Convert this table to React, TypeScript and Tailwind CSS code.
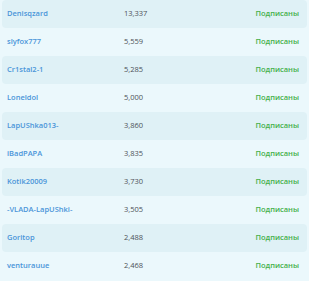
const rows = [
  { name: "Denisqzard", count: "13,337" },
  { name: "slyfox777", count: "5,559" },
  { name: "Cr1stal2-1", count: "5,285" },
  { name: "Loneldol", count: "5,000" },
  { name: "LapUShka013-", count: "3,860" },
  { name: "iBadPAPA", count: "3,835" },
  { name: "Kotik20009", count: "3,730" },
  { name: "-VLADA-LapUShki-", count: "3,505" },
  { name: "Goritop", count: "2,488" },
  { name: "venturauue", count: "2,468" },
];

export default function App() {
  return (
    <div
      className="w-[309px] h-[281px] bg-[#ebf8fc] px-[2px] overflow-hidden"
      style={{ fontFamily: '"Open Sans", "Noto Sans", sans-serif' }}
    >
      {rows.map((r, i) => (
        <div
          key={r.name}
          className={
            "flex items-center h-[28px] rounded-[4px] text-[7.5px] " +
            (i % 2 === 0 ? "bg-[#dff1f6]" : "bg-transparent")
          }
        >
          <span className="w-[122px] pl-[5px] font-semibold text-[#4a95d9]">
            {r.name}
          </span>
          <span className="text-[#4d5258]">{r.count}</span>
          <span className="ml-auto pr-[8px] font-semibold text-[#45b04a]">
            Подписаны
          </span>
        </div>
      ))}
    </div>
  );
}
